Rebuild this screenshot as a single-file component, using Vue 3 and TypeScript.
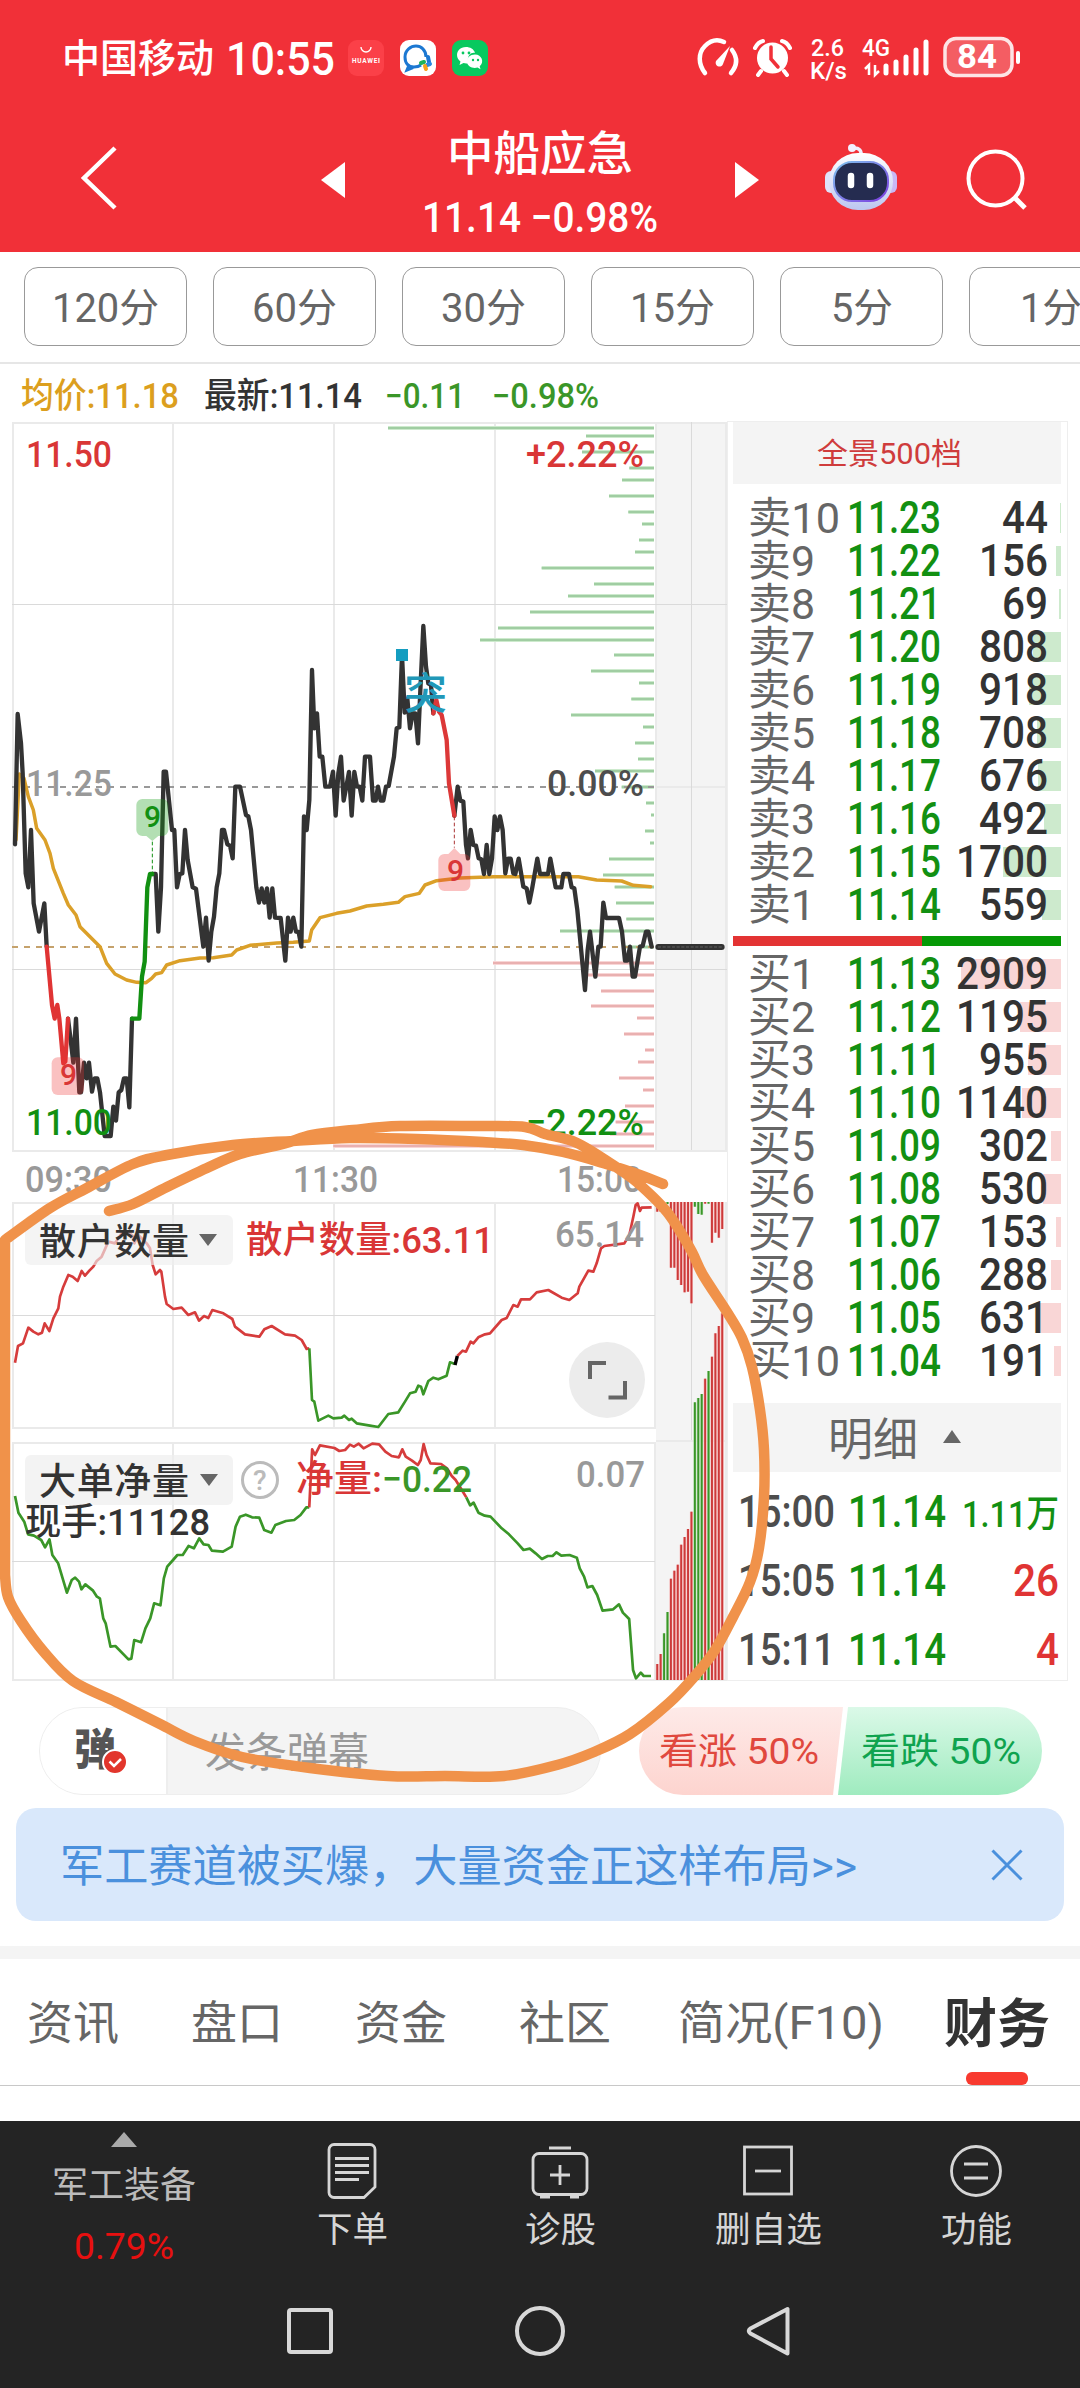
<script setup lang="ts">
import { h } from 'vue'

interface TextProps { t: string; w: number; s: number; y: number; b?: number; cjk?: boolean }

// One line of text set to an exact advance width, baseline at y.
const T = (p: TextProps) =>
  h('svg', { width: p.w, height: p.y + 8, style: { display: 'block', overflow: 'visible', flex: 'none' } }, [
    h('text', {
      x: 0, y: p.y, fill: 'currentColor', textLength: p.w, lengthAdjust: 'spacingAndGlyphs',
      'font-size': p.s, 'font-weight': p.b ?? 400,
      'font-family': p.cjk ? '"Noto Sans CJK SC", sans-serif' : 'Roboto, "Noto Sans CJK SC", sans-serif',
    }, p.t),
  ])
T.props = ['t', 'w', 's', 'y', 'b', 'cjk']

const periods = [
  { t: '120分', w: 107 }, { t: '60分', w: 85 }, { t: '30分', w: 85 },
  { t: '15分', w: 85 }, { t: '5分', w: 62 }, { t: '1分', w: 62 },
]

const level = (side: string, rows: [number, string, number][]) =>
  rows.map(([n, price, vol]) => ({ label: side + n, lw: n > 9 ? 92 : 67, price, vol: String(vol), bar: Math.max(1, vol / 29.09) }))

const asks = level('卖', [
  [10, '11.23', 44], [9, '11.22', 156], [8, '11.21', 69], [7, '11.20', 808], [6, '11.19', 918],
  [5, '11.18', 708], [4, '11.17', 676], [3, '11.16', 492], [2, '11.15', 1700], [1, '11.14', 559],
])
const bids = level('买', [
  [1, '11.13', 2909], [2, '11.12', 1195], [3, '11.11', 955], [4, '11.10', 1140], [5, '11.09', 302],
  [6, '11.08', 530], [7, '11.07', 153], [8, '11.06', 288], [9, '11.05', 631], [10, '11.04', 191],
])
const ticks = [
  { time: '15:00', vol: '1.11万', w: 97, s: 37, c: 'green' },
  { time: '15:05', vol: '26', w: 46, s: 44, c: 'red' },
  { time: '15:11', vol: '4', w: 23, s: 44, c: 'red' },
]

// [y, left edge] of order depth bars; every bar ends at x = 654
const depthUp: [number, number][] = [
  [54, 114], [78, 708], [126, 696], [174, 838], [210, 816], [258, 777], [306, 835], [342, 876], [390, 867],
  [426, 855], [474, 575], [522, 732], [558, 654], [606, 540], [654, 444], [690, 390], [735, 792], [783, 723],
  [819, 867], [867, 844], [915, 663], [951, 879], [999, 855], [1047, 864], [1083, 735], [1131, 815], [1179, 888],
  [1215, 903], [1263, 885], [1299, 900], [1347, 777], [1395, 759], [1431, 794], [1479, 798], [1527, 829],
  [1563, 630], [1611, 820],
]
const depthDown: [number, number][] = [
  [1659, 429], [1695, 705], [1743, 753], [1788, 723], [1824, 861], [1872, 822], [1920, 885], [1956, 864],
  [2004, 807], [2040, 879], [2088, 825], [2136, 797], [2172, 780], [2208, -50],
]
const depth = [
  ...depthUp.map(([y, x]) => ({ y: 410 + y / 3, x: 350 + x / 3, a: '#cdeacd', b: '#a0cda2' })),
  ...depthDown.map(([y, x]) => ({ y: 410 + y / 3, x: 350 + x / 3, a: '#f8d6d6', b: '#e9b0b0' })),
]

const R = '#d63c3c'
const G = '#3a9628'
const upper = [1211.7, 1211.7, 1210, 1204, 1267.7, 1267.7, 1280, 1285, 1292.3, 1291.7, 1303.3, 1206.7, 1214, 1214.7, 1203.7, 1203.7, 1242.7, 1232.7, 1237.7, 1229]
const upperColors = 'rrrgrrrrrrrgggrgrrrr'
const lower = [1664, 1654, 1633.3, 1612, 1578.7, 1570.7, 1564.7, 1544.7, 1537, 1529, 1511.7, 1402.3, 1398, 1394, 1378.7, 1371, 1356.7, 1333.3, 1326, 1313.3]
const lowerColors = 'rrggrrrrrrrgggrgrrrr'
const strip = [
  ...upper.map((v, i) => ({ x: 656.3 + i * 3.42, y: 1202, h: v - 1202, c: upperColors[i] })),
  ...lower.map((v, i) => ({ x: 656.3 + i * 3.42, y: v, h: 1680 - v, c: lowerColors[i] })),
]

const priceA = '45,283 53,-108 63,-20 68,70 77,370 85,412 93,240 101,460 117,545 133,460 140,590'
const priceB = '204,806 212,870 220,938 228,806 238,1027 243,1027 252,938 260,985 267,938 276,1025 284,985 292,985 300,1027 314,1158 332,1158 340,1070 348,1112 356,1027 364,1020 372,985 380,985 388,1072 396,806'
const priceC = '457,372 467,372 475,545 483,412 491,65 498,65 516,240 523,240 531,412 539,372 547,370 555,240 563,330 578,412 588,416 610,590 618,503 626,632 634,545 642,500 650,412 658,370 666,240 672,240 682,283 690,287 698,325 706,110 720,110 738,195 745,199 753,240 769,412 777,458 785,415 793,458 801,415 809,503 817,415 825,503 842,504 856,632 864,503 872,545 880,503 888,545 896,546 904,590 912,199 920,240 928,150 936,-240 943,-65 951,-110 959,20 967,20 976,110 990,110 999,65 1007,197 1015,70 1023,20 1031,152 1039,110 1047,66 1055,197 1063,66 1071,110 1079,110 1087,152 1095,20 1110,20 1119,152 1127,152 1134,110 1142,152 1150,152 1158,110 1166,108 1182,20 1190,-65 1198,-68 1206,-285 1214,-112 1222,-155 1230,-65 1238,-110 1246,-110 1254,-20 1262,-200 1270,-372 1278,-250 1285,-200 1293,-195 1300,-110'
const priceD = '1363,197 1373,110 1381,152 1390,155 1398,285 1404,325 1412,240 1420,285 1428,287 1436,325 1444,328 1452,372 1460,285 1468,372 1476,325 1484,199 1492,240 1500,199 1508,240 1516,370 1524,326 1532,326 1540,370 1546,372 1556,326 1570,410 1580,415 1588,458 1597,412 1612,326 1620,372 1644,372 1651,326 1667,412 1684,412 1690,372 1707,372 1715,412 1723,415 1732,480 1755,720 1763,600 1770,545 1786,680 1795,590 1802,590 1810,458 1818,504 1857,504 1866,545 1875,632 1882,632 1890,590 1898,680 1905,680 1920,590 1928,588 1938,545 1945,545 1955,590'
const average = '48,270 58,72 72,85 85,140 100,180 110,235 135,270 150,310 160,355 190,430 205,465 228,495 240,530 270,560 300,590 320,640 345,672 380,690 410,697 438,698 455,685 467,672 485,668 500,645 540,632 600,624 640,623 695,615 710,600 750,586 830,579 880,577 928,573 935,540 960,503 1010,490 1050,483 1100,468 1150,463 1195,457 1215,440 1258,430 1275,405 1310,392 1380,384 1480,380 1590,380 1735,380 1790,390 1865,393 1900,406 1952,410'

const retailA = '45,788 54,738 69,730 85,683 100,695 115,703 126,698 134,670 148,693 160,655 175,625 180,590 190,560 205,525 218,530 233,543 245,513 255,527 268,512 280,500 290,483 305,470 325,425 345,430 365,400 385,395 400,410 403,430 415,405 440,430 450,445 458,495 467,523 480,510 484,515 495,590 500,612 520,627 545,623 565,645 585,637 597,662 612,648 625,654 637,630 670,640 697,657 705,680 735,703 778,710 793,688 815,678 855,703 885,707 905,720 920,747 928,745'
const retailB = '928,745 936,900 943,905 955,962 985,947 1000,955 1025,953 1033,947 1047,960 1055,956 1070,970 1110,977 1135,981 1165,942 1195,937 1215,905 1230,880 1247,875 1255,857 1263,860 1270,883 1285,843 1300,833 1315,838 1340,827 1350,787 1365,792'
const retailC = '1372,768 1388,752 1398,755 1412,725 1420,730 1435,712 1455,703 1470,700 1505,660 1520,654 1540,615 1553,620 1563,598 1590,598 1610,577 1645,570 1685,593 1708,600 1733,580 1738,560 1765,512 1780,515 1790,490 1803,445 1813,438 1873,430 1888,405 1900,350 1907,315 1913,310 1920,333 1925,323 1955,322'

const netA = '31,228 38,278 50,305 58,343 70,347 85,360 93,382 102,358 108,405 120,430 138,518 148,480 155,473 163,485 168,508 176,493 192,512 200,530 206,535 213,595 218,610 228,680 238,678 265,718 271,716 277,660 291,667 300,625 310,595 318,550 331,556 338,475 345,440 357,420 366,405 377,405 389,378 400,385 411,355 420,373 430,375 437,392 460,395 478,380 486,320 495,290 507,284 520,292 535,293 545,330 560,338 568,315 590,303 607,300 620,285 632,262 638,262'
const netB = '638,262 644,88 650,105 660,76 690,84 700,93 712,90 722,74 730,80 740,71 750,85 768,71 782,73 795,95 808,108 823,112 830,88 837,110 850,122 862,135 868,120 874,72 880,105 888,130 910,132 922,145 932,168 940,180 955,215 962,232'
const netC = '962,232 970,256 977,248 987,278 1000,287 1012,290 1035,325 1050,343 1068,370 1080,390 1093,386 1105,400 1118,417 1130,408 1140,408 1148,397 1158,407 1175,405 1190,413 1196,445 1205,470 1212,502 1222,498 1232,525 1243,572 1265,568 1277,553 1285,578 1298,597 1306,750 1312,775 1322,758 1328,768 1343,768'

// Hand-drawn ring: two smooth strokes joined by the straight run down the left edge.
const smooth = (pts: number[][]) => {
  let d = ''
  for (let i = 0; i < pts.length - 1; i++) {
    const a = pts[Math.max(0, i - 1)], b = pts[i], c = pts[i + 1], e = pts[Math.min(pts.length - 1, i + 2)]
    d += `C${b[0] + (c[0] - a[0]) / 6} ${b[1] + (c[1] - a[1]) / 6} ${c[0] - (e[0] - b[0]) / 6} ${c[1] - (e[1] - b[1]) / 6} ${c[0]} ${c[1]}`
  }
  return d
}
const ringA = [[109, 1211], [133, 1204], [167, 1187], [207, 1168], [240, 1154], [283, 1144], [312, 1135], [353, 1130], [400, 1126], [483, 1126], [525, 1127], [545, 1134], [577, 1143], [613, 1165], [633, 1179], [653, 1197], [667, 1212], [678, 1228], [692, 1252], [703, 1275], [727, 1312], [742, 1338], [752, 1367], [760, 1410], [764, 1450], [764, 1497], [759, 1548], [750, 1582], [733, 1617], [715, 1650], [694, 1677], [669, 1703], [630, 1734], [594, 1752], [557, 1765], [504, 1776], [445, 1776], [388, 1776], [310, 1768], [242, 1757], [194, 1741], [160, 1724], [116, 1702], [73, 1681], [44, 1652], [21, 1621], [8, 1597], [5, 1575]]
const ringB = [[5, 1240], [50, 1208], [87, 1188], [133, 1164], [167, 1155], [233, 1145], [293, 1141], [350, 1138], [417, 1139], [483, 1142], [523, 1145], [563, 1152], [603, 1163], [640, 1175], [663, 1184]]
const ring = `M109 1211${smooth(ringA)}L5 1240${smooth(ringB)}`
</script>

<template>
  <div class="app">
    <header class="top">
      <div class="status">
        <T t="中国移动" :w="152" :s="39" :y="72" :b="500" cjk />
        <T class="clock" t="10:55" :w="109" :s="46" :y="75" :b="500" />
        <svg class="notif" width="140" height="36" viewBox="0 0 140 36">
          <rect width="36" height="36" rx="9" fill="#fb4048" />
          <path d="M13 7a5 5 0 0 0 10 0" fill="none" stroke="#fff" stroke-width="1.4" />
          <text x="4" y="23" font-size="6.5" font-weight="700" textLength="28" fill="#fff" font-family="Roboto">HUAWEI</text>
          <rect x="52" width="36" height="36" rx="9" fill="#fff" />
          <path d="M78 17c0-7-5-11-10-11S57 10 57 17s4 10 9 10c3 0 5-.5 7-2M61 25l-2 5 6-2.500" fill="none" stroke="#1c78d2" stroke-width="3" />
          <path d="M80 17l1 5" stroke="#1c78d2" stroke-width="4" stroke-linecap="round" /><path d="M73 23l3-1" stroke="#1fb25a" stroke-width="4" stroke-linecap="round" /><path d="M82 24l-3 1" stroke="#2a88e0" stroke-width="4" stroke-linecap="round" /><path d="M77 26l1 3" stroke="#f9a01b" stroke-width="4" stroke-linecap="round" />
          <rect x="104" width="36" height="36" rx="9" fill="#07c95f" />
          <path d="M118 7c-6 0-9 4-9 8 0 3 1.500 5 3.500 6.500L111.500 25l4-2c2 .5 3 .5 5 .2C118 15 124 12 127 13c-1-4-5-6-9-6z" fill="#fff" />
          <path d="M127 14.500c-5 0-8 3-8 7 0 5 6 7.500 10.500 6l3 1.700-.8-3c5-4 2-11.700-4.700-11.700z" fill="#fff" />
          <g fill="#07c95f"><circle cx="115" cy="13" r="1.400" /><circle cx="121" cy="13" r="1.400" /><circle cx="125" cy="20" r="1.200" /><circle cx="130" cy="20" r="1.200" /></g>
        </svg>
        <svg class="sys" width="326" height="46" viewBox="696 36 326 46" fill="none" stroke="#fff">
          <path d="M705 73c-7-9-7-20 0-27 6-6 13-7 19-4M732 50c6 8 5 16-1 23" stroke-width="4.500" stroke-linecap="round" />
          <path d="M730 46l-7 18c-2 5-9 2-7-3z" fill="#fff" stroke="none" />
          <circle cx="772.500" cy="58" r="15.500" fill="#fff" stroke="none" />
          <path d="M755 48q3-6 8-7M790 48q-3-6-8-7M761 71l-3 4M784 71l3 4" stroke-width="4" stroke-linecap="round" />
          <path d="M771 47v12l7 8" stroke="#f13038" stroke-width="3.500" stroke-linecap="round" />
          <g fill="#fff" stroke="none" font-family="Roboto" font-weight="500">
            <text x="811" y="56" font-size="24" textLength="33" lengthAdjust="spacingAndGlyphs">2.6</text>
            <text x="810" y="79" font-size="24" textLength="37" lengthAdjust="spacingAndGlyphs">K/s</text>
            <text x="862" y="56" font-size="24" textLength="28" lengthAdjust="spacingAndGlyphs">4G</text>
            <text x="957" y="68" font-size="33" textLength="40" lengthAdjust="spacingAndGlyphs" font-weight="700">84</text>
          </g>
          <path d="M869 75V65l-4 4M875 65v10l4-4" stroke-width="2.500" />
          <path d="M886 73v-7M896 73V62M906 73V57M916 73V50M926 73V42" stroke-width="5" stroke-linecap="round" />
          <rect x="945" y="38.500" width="67" height="37" rx="11" fill="#fff" fill-opacity=".22" stroke="#fde4e5" stroke-width="3.500" />
          <path d="M1018 53v9" stroke-width="4" stroke-linecap="round" />
        </svg>
      </div>
      <div class="nav">
        <svg width="40" height="66" viewBox="80 145 40 66"><path d="M115 148L84 178l31 30" fill="none" stroke="#fff" stroke-width="4.500" /></svg>
        <svg class="prev" width="24" height="36"><path d="M0 18L24 0v36z" fill="#fff" /></svg>
        <div class="title">
          <T t="中船应急" :w="186" :s="46.500" :y="70" :b="500" cjk />
          <T t="11.14 −0.98%" :w="236" :s="42" :y="54" :b="500" />
        </div>
        <svg class="next" width="24" height="36"><path d="M24 18L0 0v36z" fill="#fff" /></svg>
        <svg class="robot" width="72" height="68" viewBox="0 0 72 68">
          <defs>
            <linearGradient id="shell" x1="0" y1="0" x2="0" y2="1"><stop offset="0" stop-color="#fff" /><stop offset="1" stop-color="#bcc6f0" /></linearGradient>
            <linearGradient id="rim" x1="0" y1="0" x2="1" y2="1"><stop offset="0" stop-color="#7fc4ee" /><stop offset="1" stop-color="#7b3be0" /></linearGradient>
          </defs>
          <path d="M36 14c1-7-2-9-7-9" fill="none" stroke="#f0eefc" stroke-width="3.500" /><circle cx="27" cy="5" r="4" fill="#f3f0ff" />
          <rect x="0" y="28" width="12" height="22" rx="6" fill="#dfe2fa" /><rect x="60" y="28" width="12" height="22" rx="6" fill="#c9b8f5" />
          <rect x="4" y="10" width="64" height="57" rx="29" fill="url(#shell)" />
          <rect x="9" y="19" width="54" height="39" rx="18" fill="#252c50" stroke="url(#rim)" stroke-width="2" />
          <path d="M26 33v9M45 33v9" stroke="#fff" stroke-width="6.500" stroke-linecap="round" />
        </svg>
        <svg class="search" width="62" height="62" fill="none" stroke="#fff" stroke-width="4"><circle cx="29.500" cy="29.500" r="27" /><path d="M48 48l11 11" stroke-width="5" /></svg>
      </div>
    </header>

    <nav class="periods">
      <button v-for="p in periods" :key="p.t"><T :t="p.t" :w="p.w" :s="40" :y="54" cjk /></button>
    </nav>

    <div class="quote">
      <T class="gold" t="均价:11.18" :w="158" :s="35" :y="43.500" :b="500" />
      <T class="ink" t="最新:11.14" :w="158" :s="35" :y="43.500" :b="500" />
      <T class="lime" t="−0.11" :w="80" :s="35" :y="43.500" :b="500" />
      <T class="lime" t="−0.98%" :w="107" :s="35" :y="43.500" :b="500" />
    </div>

    <main class="main">
      <svg class="chart" width="727" height="1262" viewBox="0 420 727 1262" fill="none">
        <rect x="656" y="423" width="71" height="728" fill="#f4f4f4" />
        <rect x="656" y="1202" width="71" height="478" fill="#f4f4f4" />
        <g stroke="#eaeaea" stroke-width="2">
          <path d="M12 423H727M12 1151H727M13 422V1152M173 422V1152M334 422V1152M495 422V1152M656 422V1152M726 422V1152M656 787h70" />
          <path d="M12 1203H655M12 1428H655M13 1202V1429M173 1202V1429M334 1202V1429M495 1202V1429M655 1202V1429" />
          <path d="M12 1443H655M12 1680H727M13 1442V1680M173 1442V1680M334 1442V1680M495 1442V1680M655 1442V1680M656 1441h70M726 1202V1680" />
        </g>
        <path d="M12 604.500H727M12 969.500H727M12 1315.500H655M12 1561.500H655M691.500 422V1150M691.500 1202V1440" stroke="#dadada" />
        <g v-for="(d, i) in depth" :key="i">
          <path :d="`M${d.x} ${d.y}H654`" :stroke="d.a" stroke-width="4" />
          <path :d="`M${d.x} ${d.y}H654`" :stroke="d.b" stroke-width="2" />
        </g>
        <path d="M12 787H654" stroke="#999" stroke-width="2" stroke-dasharray="6 6" />
        <path d="M12 947H654" stroke="#c5a26c" stroke-width="2" stroke-dasharray="6 6" />
        <g transform="translate(0 750) scale(.33333)" stroke-width="13" stroke-linejoin="round" stroke-linecap="round" stroke="#333">
          <polyline :points="average" stroke="#dba029" stroke-width="10.500" />
          <polyline :points="priceA" /><polyline :points="priceB" /><polyline :points="priceC" /><polyline :points="priceD" />
          <polyline points="140,590 156,765 164,806 172,765 178,806 190,940 196,935 204,806" stroke="#e03434" />
          <polyline points="396,806 418,806 426,680 434,635 442,412 450,372 457,372" stroke="#129012" />
          <polyline points="1300,-110 1309,-150 1317,-115 1325,-105 1340,-30 1347,100 1363,197" stroke="#dc3838" />
          <path d="M1975 591H2165" stroke-width="18" /><path d="M1975 591H2165" stroke="#777" stroke-width="2" stroke-dasharray="7 7" />
          <path d="M457 275V372" stroke="#129012" stroke-width="3" stroke-dasharray="11 7" stroke-linecap="butt" />
          <path d="M1363 200V293" stroke="#a33" stroke-width="3" stroke-dasharray="11 7" stroke-linecap="butt" />
          <g stroke="none">
            <path d="M427 147h60a18 18 0 0 1 18 18v75a18 18 0 0 1-18 18h-12l-18 15-18-15h-12a18 18 0 0 1-18-18v-75a18 18 0 0 1 18-18z" fill="#129c12" fill-opacity=".32" />
            <rect x="155" y="922" width="97" height="113" rx="18" fill="#e33" fill-opacity=".3" />
            <path d="M1333 312h12l18-18 18 18h12a18 18 0 0 1 18 18v75a18 18 0 0 1-18 18h-60a18 18 0 0 1-18-18v-75a18 18 0 0 1 18-18z" fill="#e33" fill-opacity=".3" />
            <rect x="1188" y="-303" width="36" height="36" fill="#149dc0" />
          </g>
        </g>
        <g class="num">
          <text x="144" y="827" class="f-green" font-size="30">9</text>
          <text x="60" y="1085" class="f-red" font-size="30">9</text>
          <text x="447" y="881" class="f-red" font-size="30">9</text>
          <text x="404" y="709" font-size="43" class="mark">突</text>
          <text x="26" y="467" textLength="86" lengthAdjust="spacingAndGlyphs" class="f-red">11.50</text>
          <text x="526" y="467" textLength="118" lengthAdjust="spacingAndGlyphs" class="f-red">+2.22%</text>
          <text x="26" y="795.500" textLength="86" lengthAdjust="spacingAndGlyphs" fill="#999" class="f-gray">11.25</text>
          <text x="547" y="795.500" textLength="97" lengthAdjust="spacingAndGlyphs" fill="#4d4d4d">0.00%</text>
          <text x="26" y="1135" textLength="86" lengthAdjust="spacingAndGlyphs" class="f-green">11.00</text>
          <text x="526" y="1134.500" textLength="118" lengthAdjust="spacingAndGlyphs" class="f-green">−2.22%</text>
          <g class="f-gray">
            <text x="25" y="1192" textLength="87" lengthAdjust="spacingAndGlyphs">09:30</text>
            <text x="293" y="1192" textLength="85" lengthAdjust="spacingAndGlyphs">11:30</text>
            <text x="557" y="1192" textLength="85" lengthAdjust="spacingAndGlyphs">15:00</text>
          </g>
        </g>
        <rect v-for="(b, i) in strip" :key="i" :x="b.x - 0.6" :y="b.y" width="3" :height="b.h" :fill="b.c === 'r' ? '#f6bcbc' : '#bfe0b8'" />
        <rect v-for="(b, i) in strip" :key="'s' + i" :x="b.x" :y="b.y" width="1.900" :height="b.h" :fill="b.c === 'r' ? '#cc3a3a' : '#3a9628'" />
        <g transform="translate(0 1100) scale(.33333)" stroke-width="8" stroke-linejoin="round">
          <polyline :points="retailA" :stroke="R" /><polyline :points="retailB" :stroke="G" /><polyline :points="retailC" :stroke="R" />
          <path d="M1365 795L1372 768" stroke="#000" stroke-width="10" />
        </g>
        <g transform="translate(0 1420) scale(.48472 .33333)" stroke-width="2.700" stroke-linejoin="round">
          <polyline v-for="(n, i) in [netA, netB, netC]" :key="i" :points="n" :stroke="i === 1 ? R : G" vector-effect="non-scaling-stroke" />
        </g>
        <rect x="25" y="1215" width="208" height="50" rx="6" fill="#eee" fill-opacity=".65" />
        <rect x="25" y="1455" width="208" height="50" rx="6" fill="#eee" fill-opacity=".72" />
        <path d="M199 1234h18l-9 12zM200 1474h18l-9 12z" fill="#666" />
        <circle cx="260" cy="1480" r="17.500" stroke="#bbb" stroke-width="3" />
        <g class="num">
          <text x="39" y="1255" textLength="150">散户数量</text>
          <text x="39" y="1495" textLength="150">大单净量</text>
          <text x="253" y="1490" font-size="28" class="help">?</text>
          <text x="246" y="1253" textLength="248" lengthAdjust="spacingAndGlyphs" class="f-red">散户数量:63.11</text>
          <text x="296" y="1492" textLength="86" lengthAdjust="spacingAndGlyphs" class="f-red">净量:</text>
          <text x="382" y="1492" textLength="90" lengthAdjust="spacingAndGlyphs" :fill="G">−0.22</text>
          <text x="25" y="1535" textLength="185" lengthAdjust="spacingAndGlyphs">现手:11128</text>
          <text x="555" y="1247" textLength="89" lengthAdjust="spacingAndGlyphs" class="f-gray">65.14</text>
          <text x="576" y="1487" textLength="69" lengthAdjust="spacingAndGlyphs" class="f-gray">0.07</text>
        </g>
        <circle cx="607" cy="1380" r="38" fill="#ececec" />
        <path d="M590 1379V1363H606M625 1381V1397.500H608.500" stroke="#666" stroke-width="4" />
      </svg>

      <aside class="book">
        <div class="book-head"><T t="全景500档" :w="145" :s="30" :y="42" cjk /></div>
        <ul class="levels asks">
          <li v-for="l in asks" :key="l.label">
            <i :style="{ width: l.bar + 'px' }"></i>
            <T class="lab" :t="l.label" :w="l.lw" :s="43" :y="36" cjk />
            <T class="price" :t="l.price" :w="94" :s="43.500" :y="36.300" :b="500" />
            <T class="vol" :t="l.vol" :w="l.vol.length * 23" :s="43.500" :y="36.300" :b="500" />
          </li>
        </ul>
        <div class="ratio"></div>
        <ul class="levels bids">
          <li v-for="l in bids" :key="l.label">
            <i :style="{ width: l.bar + 'px' }"></i>
            <T class="lab" :t="l.label" :w="l.lw" :s="43" :y="35.500" cjk />
            <T class="price" :t="l.price" :w="94" :s="43.500" :y="36" :b="500" />
            <T class="vol" :t="l.vol" :w="l.vol.length * 23" :s="43.500" :y="36" :b="500" />
          </li>
        </ul>
        <div class="detail"><T t="明细" :w="90" :s="45" :y="53" cjk /><svg width="18" height="13"><path d="M0 13L9 0l9 13z" fill="#666" /></svg></div>
        <ul class="ticks">
          <li v-for="k in ticks" :key="k.time">
            <T class="time" :t="k.time" :w="97" :s="43.500" :y="54.500" :b="500" />
            <T class="price" t="11.14" :w="98" :s="43.500" :y="54.500" :b="500" />
            <T class="vol" :class="k.c" :t="k.vol" :w="k.w" :s="k.s" :y="54.500" :b="500" />
          </li>
        </ul>
      </aside>
    </main>

    <section class="danmu">
      <div class="pill">
        <div class="toggle">
          <T t="弹" :w="42" :s="43" :y="57" :b="900" cjk />
          <svg class="check" width="26" height="26"><circle cx="13" cy="13" r="12" fill="#e2362c" stroke="#fff" stroke-width="2" /><path d="M7.500 12.500l4.500 4.500 7-7" fill="none" stroke="#fff" stroke-width="2.500" /></svg>
        </div>
        <div class="ph"><T t="发条弹幕" :w="164" :s="41" :y="59" cjk /></div>
      </div>
      <div class="vote up"><T t="看涨 50%" :w="160" :s="36.500" :y="57" cjk /></div>
      <div class="vote down"><T t="看跌 50%" :w="160" :s="36.500" :y="57" cjk /></div>
    </section>

    <section class="banner">
      <T t="军工赛道被买爆，大量资金正这样布局>>" :w="797" :s="44" :y="74" cjk />
      <svg width="32" height="32"><path d="M1.500 1.500l29 29M30.500 1.500l-29 29" stroke="#4a90dd" stroke-width="3" /></svg>
    </section>

    <nav class="tabs">
      <T t="资讯" :w="92" :s="46" :y="80" cjk />
      <T t="盘口" :w="92" :s="46" :y="80" cjk />
      <T t="资金" :w="92" :s="46" :y="80" cjk />
      <T t="社区" :w="92" :s="46" :y="80" cjk />
      <T class="f10" t="简况(F10)" :w="206" :s="46" :y="80" cjk />
      <div class="current"><T t="财务" :w="106" :s="53" :y="84" :b="700" cjk /></div>
    </nav>

    <footer class="foot">
      <div class="tools">
        <div class="sector">
          <svg width="26" height="15"><path d="M0 15L13 0l13 15z" fill="#aaa" /></svg>
          <T t="军工装备" :w="144" :s="36" :y="50.500" cjk />
          <T class="pct" t="0.79%" :w="100" :s="37" :y="53" cjk />
        </div>
        <div class="tool">
          <svg width="50" height="56" fill="none" stroke="#d6d6d6" stroke-width="2.800"><path d="M7 1.500h36a5 5 0 0 1 5 5V44L37 54.500H7a5 5 0 0 1-5-5v-43a5 5 0 0 1 5-5z" /><path d="M8 15.500h34M8 22.500h34M8 29.500h34M8 36.500h24" /></svg>
          <T t="下单" :w="71" :s="35" :y="34.500" cjk />
        </div>
        <div class="tool">
          <svg width="58" height="56" fill="none" stroke="#d6d6d6" stroke-width="2.800"><rect x="2" y="10.500" width="54" height="41" rx="6" /><path d="M18 5h22M29 22v20M19 32h20M9 54h10M39 54h9" /></svg>
          <T t="诊股" :w="71" :s="35" :y="34.500" cjk />
        </div>
        <div class="tool">
          <svg width="50" height="56" fill="none" stroke="#d6d6d6" stroke-width="2.800"><rect x="1.500" y="4" width="47" height="47" /><path d="M12 28h26" /></svg>
          <T t="删自选" :w="107" :s="35" :y="34.500" cjk />
        </div>
        <div class="tool">
          <svg width="54" height="56" fill="none" stroke="#d6d6d6" stroke-width="2.800"><circle cx="27" cy="28" r="24.500" /><path d="M15 21h24M15 35h24" /></svg>
          <T t="功能" :w="71" :s="35" :y="34.500" cjk />
        </div>
      </div>
      <svg class="keys" width="510" height="54" fill="none" stroke="#d8d8d8" stroke-width="4">
        <rect x="4" y="5" width="42" height="42" rx="2" /><circle cx="255" cy="26" r="23" /><path d="M502.500 4V48.500L465.500 28.500Q462 26 465.500 23.500z" stroke-linejoin="round" />
      </svg>
    </footer>

    <svg class="scribble" width="1080" height="720" viewBox="0 1100 1080 720"><path :d="ring" fill="none" stroke="#f0924a" stroke-width="10.500" stroke-linejoin="round" stroke-linecap="round" /></svg>
  </div>
</template>

<style>
body { margin: 0; background: #fff; }
</style>

<style scoped>
.app { position: relative; width: 1080px; height: 2388px; overflow: hidden; background: #fff; font-family: "Noto Sans CJK SC", sans-serif; }
ul { list-style: none; margin: 0; padding: 0; }
.top { height: 252px; background: #f13038; color: #fff; }
.status { display: flex; height: 100px; padding-left: 62px; }
.clock { margin-left: 12px; }
.notif { margin: 40px 0 0 13px; flex: none; }
.sys { margin: 36px 0 0 208px; flex: none; overflow: visible; }
.nav { display: flex; height: 152px; padding-left: 80px; }
.nav > svg { flex: none; margin-top: 45px; }
.nav > .prev { margin: 62px 0 0 201px; }
.title { width: 390px; display: flex; flex-direction: column; align-items: center; }
.nav > .next { margin: 62px 0 0; }
.nav > .robot { margin: 43px 0 0 66px; }
.nav > .search { margin: 49px 0 0 69px; }
.periods { display: flex; gap: 26px; height: 95px; padding: 15px 0 0 24px; border-bottom: 2px solid #e6e6e6; overflow: hidden; }
.periods button { flex: none; box-sizing: border-box; display: flex; justify-content: center; align-items: flex-start; width: 163px; height: 79px; padding: 0; background: #fff; border: 1.500px solid #999; border-radius: 14px; color: #666; font: inherit; }
.quote { display: flex; height: 56px; padding-left: 21px; }
.gold { color: #dc9f1e; margin-right: 25px; }
.ink { color: #333; margin-right: 23px; }
.lime { color: #3a9628; margin-right: 27px; }
.main { display: flex; height: 1262px; }
.chart { flex: none; display: block; }
.num { font-family: Roboto, "Noto Sans CJK SC", sans-serif; font-weight: 500; font-size: 37px; fill: #333; }
.f-red { fill: #d93636; }
.f-green { fill: #129012; }
.f-gray { fill: #999; }
.mark { fill: #2198b8; }
.help { fill: #bbb; }
.book { box-sizing: border-box; width: 341px; height: 1260px; margin-top: 1px; padding: 0 6px 0 5px; border: 1px solid #eee; }
.book-head { height: 62px; display: flex; justify-content: center; background: #f4f4f4; color: #cf3c3c; padding-right: 16px; }
.levels li { position: relative; height: 43px; display: flex; padding-left: 15px; }
.levels li > i { position: absolute; right: 0; top: 6px; height: 30px; background: #cdeacd; }
.bids li > i { background: #f9d6d6; }
.levels li > svg { position: relative; }
.asks { margin-top: 13px; }
.bids { margin-top: 7px; }
.lab { color: #666; }
.price { color: #129012; }
.levels li > .price { position: absolute; left: 114px; }
.levels .vol { margin-left: auto; margin-right: 13px; color: #333; }
.ratio { height: 10px; margin-top: 9px; background: linear-gradient(90deg, #e33333 0 188.500px, #069906 188.500px); }
.detail { display: flex; height: 69px; margin-top: 20px; padding-left: 95px; background: #f4f4f4; color: #666; }
.detail > svg:last-child { margin: 27px 0 0 25px; }
.ticks li { display: flex; height: 69px; padding: 0 2px 0 5px; }
.time { color: #4d4d4d; margin-right: 13px; }
.ticks .vol { margin-left: auto; }
.green { color: #129012; }
.red { color: #e03434; }
.danmu { display: flex; height: 88px; padding: 25px 0 0 39px; }
.pill { box-sizing: border-box; display: flex; width: 562px; height: 88px; border: 1px solid #eee; border-radius: 44px; overflow: hidden; background: #f4f4f4; }
.toggle { position: relative; box-sizing: border-box; width: 128px; padding-left: 34px; background: #fff; border-right: 2px solid #eee; color: #555; }
.check { position: absolute; left: 62px; top: 41px; }
.ph { padding-left: 37px; color: #999; }
.vote { display: flex; height: 88px; box-sizing: border-box; }
.up { width: 204px; margin-left: 38px; padding-left: 20px; color: #e0483e; background: linear-gradient(#feeae8, #fdd4cf); border-radius: 44px 0 0 44px; clip-path: polygon(0 0, 100% 0, 194px 100%, 0 100%); }
.down { width: 204px; margin-left: -5px; padding-left: 23px; color: #0fa34f; background: linear-gradient(#dbf9e8, #9febbf); border-radius: 0 44px 44px 0; clip-path: polygon(10px 0, 100% 0, 100% 100%, 0 100%); }
.banner { display: flex; justify-content: space-between; height: 113px; margin: 13px 16px 0; padding: 0 41px 0 44px; background: #d9e8fb; border-radius: 20px; color: #4a90dd; }
.banner > svg:last-child { margin-top: 41px; }
.tabs { display: flex; height: 126px; margin-top: 25px; padding-left: 27px; border-top: 13px solid #f4f4f4; border-bottom: 1px solid #c8c8c8; color: #666; gap: 72px; }
.f10 { margin-left: -5px; }
.current { display: flex; flex-direction: column; justify-content: space-between; align-items: center; margin-left: -12px; color: #333; }
.current::after { content: ""; width: 62px; height: 13px; border-radius: 6px; background: #f83a2f; }
.foot { height: 267px; margin-top: 35px; background: #242424; color: #d6d6d6; }
.tools { display: flex; height: 184px; }
.sector { width: 248px; display: flex; flex-direction: column; align-items: center; color: #bbb; padding-top: 11px; }
.pct { color: #e81010; }
.tool { display: flex; flex-direction: column; align-items: center; width: 208px; padding-top: 22px; }
.tool > svg:first-child { margin-bottom: 8px; }
.keys { display: block; margin-left: 285px; }
.scribble { position: absolute; left: 0; top: 1100px; pointer-events: none; }
</style>
